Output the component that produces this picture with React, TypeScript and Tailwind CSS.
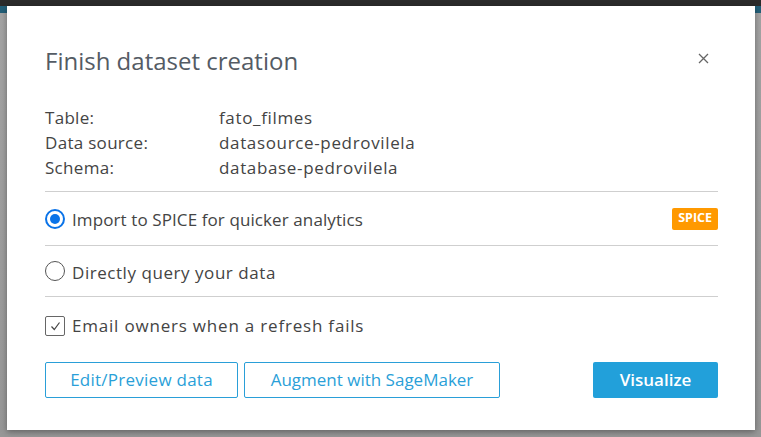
import React from 'react';

const info = [
  { label: 'Table:', value: 'fato_filmes' },
  { label: 'Data source:', value: 'datasource-pedrovilela' },
  { label: 'Schema:', value: 'database-pedrovilela' },
];

function Radio({ checked }: { checked?: boolean }) {
  return (
    <span
      className={
        'w-5 h-5 rounded-full flex items-center justify-center shrink-0 bg-white ' +
        (checked ? 'border-2 border-[#0a73e8]' : 'border border-[#555]')
      }
    >
      {checked && <span className="w-[10px] h-[10px] rounded-full bg-[#0a73e8]" />}
    </span>
  );
}

export default function App() {
  return (
    <div className="relative w-[761px] h-[437px] overflow-hidden bg-[#9c9c9c] font-['Open_Sans',sans-serif]">
      {/* page behind the overlay */}
      <div className="h-[6px] bg-[#2b2b2b]" />
      <div className="h-[7px] bg-[#235f78]" />
      <div className="h-[424px] bg-gradient-to-b from-[#a3a3a3] to-[#979797]" />

      {/* modal */}
      <div className="absolute left-[7px] top-[6px] w-[748px] h-[424px] bg-white shadow-[0_2px_6px_rgba(0,0,0,0.35)] pl-[38px] pr-[37px] pt-[39px]">
        <div className="flex items-center justify-between">
          <h1 className="text-[24px] leading-[32px] text-[#545b64]">Finish dataset creation</h1>
          <button className="mr-[9px] mt-[-6px] text-[#666]" aria-label="Close">
            <svg width="11" height="11" viewBox="0 0 11 11" fill="none" stroke="currentColor" strokeWidth="1.3">
              <path d="M1 1l9 9M10 1l-9 9" />
            </svg>
          </button>
        </div>

        <div className="mt-[28px] text-[17px] leading-[25px] text-[#444]">
          {info.map((row) => (
            <div key={row.label} className="flex">
              <span className="w-[174px] tracking-[0.3px]">{row.label}</span>
              <span className="tracking-[0.65px]">{row.value}</span>
            </div>
          ))}
        </div>

        <div className="mt-[11px] border-t border-[#cfcfcf]" />
        <div className="h-[53px] flex items-center gap-[7px] text-[17px] text-[#444]">
          <Radio checked />
          <span className="flex-1 pt-[3px] tracking-[0.1px]">Import to SPICE for quicker analytics</span>
          <span className="bg-[#ff9900] text-white text-[12.5px] font-bold rounded-[2px] px-[6px] h-[22px] flex items-center">
            SPICE
          </span>
        </div>
        <div className="border-t border-[#cfcfcf]" />
        <div className="h-[50px] flex items-center gap-[7px] text-[17px] text-[#444]">
          <Radio />
          <span className="pt-[3px] tracking-[0.55px]">Directly query your data</span>
        </div>
        <div className="border-t border-[#cfcfcf]" />

        <div className="mt-[16px] flex items-center gap-[7px] text-[17px] text-[#444]">
          <span className="w-5 h-5 border border-[#666] rounded-[2px] flex items-center justify-center">
            <svg width="11" height="10" viewBox="0 0 11 10" fill="none" stroke="#444" strokeWidth="1.2">
              <path d="M1.5 5.5l2.8 3L9.5 1.5" />
            </svg>
          </span>
          <span className="tracking-[0.8px]">Email owners when a refresh fails</span>
        </div>

        <div className="mt-[23px] flex items-center text-[17px]">
          <button className="h-[36px] w-[193px] border border-[#2a9fd8] rounded-[2px] text-[#2a9fd8] tracking-[0.25px]">
            Edit/Preview data
          </button>
          <button className="ml-[6px] h-[36px] w-[256px] border border-[#2a9fd8] rounded-[2px] text-[#2a9fd8]">
            Augment with SageMaker
          </button>
          <button className="ml-auto h-[36px] w-[125px] bg-[#22a0da] rounded-[2px] text-white font-semibold">
            Visualize
          </button>
        </div>
      </div>
    </div>
  );
}
